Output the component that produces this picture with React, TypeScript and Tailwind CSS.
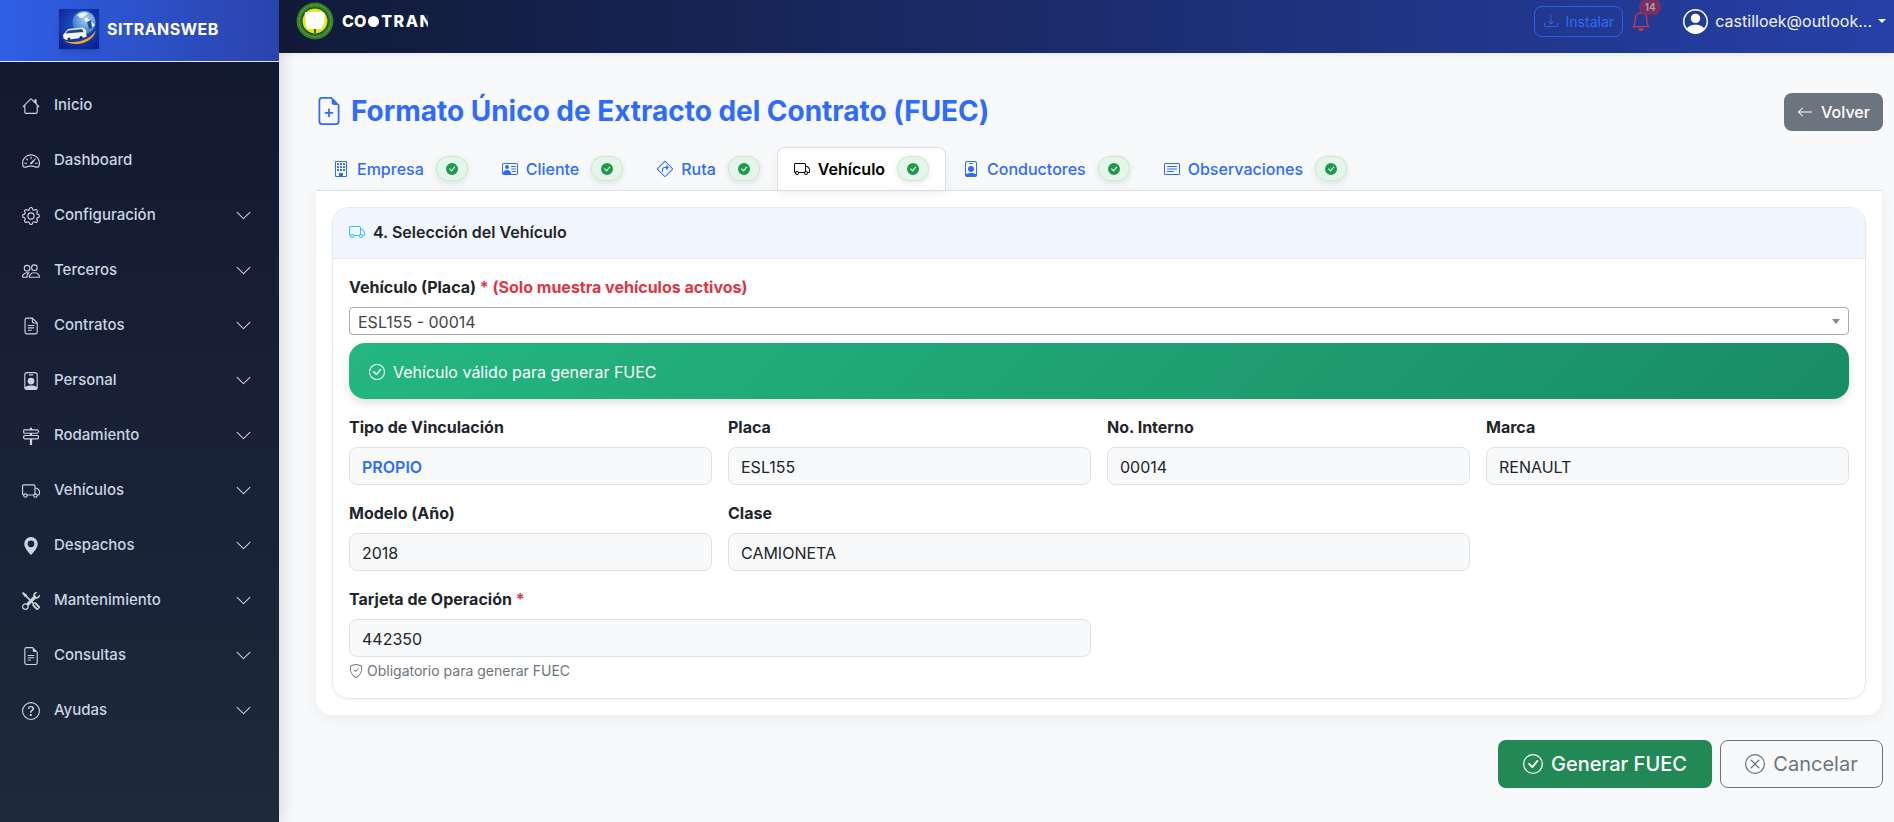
import type { ReactNode } from "react"
import {
  BsArrowLeft,
  BsBell,
  BsBuilding,
  BsCardText,
  BsCheckCircle,
  BsCheckCircleFill,
  BsChevronDown,
  BsDownload,
  BsFileEarmarkPlus,
  BsFileEarmarkText,
  BsGear,
  BsGeoAltFill,
  BsHouse,
  BsPeople,
  BsPersonBadge,
  BsPersonCircle,
  BsPersonVcard,
  BsQuestionCircle,
  BsShieldCheck,
  BsSignTurnRight,
  BsSignpost2,
  BsSpeedometer2,
  BsTools,
  BsTruck,
  BsXCircle,
} from "react-icons/bs"

function IconoContrato() {
  return (
    <svg viewBox="0 0 16 16" width="1em" height="1em" fill="none" stroke="currentColor" strokeWidth="1">
      <path d="M4.2 1h5l4.3 4.3v8.2a1.5 1.5 0 0 1-1.5 1.5H4.2a1.5 1.5 0 0 1-1.5-1.5v-11A1.5 1.5 0 0 1 4.2 1z" />
      <path d="M9.2 1v2.8a1.5 1.5 0 0 0 1.5 1.5h2.8" />
      <path d="M5.2 7.6h5.6M5.2 9.7h5.6M5.2 11.8h3.4" />
    </svg>
  )
}

const menu = [
  { nombre: "Inicio", icono: <BsHouse />, flecha: false },
  { nombre: "Dashboard", icono: <BsSpeedometer2 />, flecha: false },
  { nombre: "Configuración", icono: <BsGear />, flecha: true },
  { nombre: "Terceros", icono: <BsPeople />, flecha: true },
  { nombre: "Contratos", icono: <IconoContrato />, flecha: true },
  { nombre: "Personal", icono: <BsPersonBadge />, flecha: true },
  { nombre: "Rodamiento", icono: <BsSignpost2 />, flecha: true },
  { nombre: "Vehículos", icono: <BsTruck />, flecha: true },
  { nombre: "Despachos", icono: <BsGeoAltFill />, flecha: true },
  { nombre: "Mantenimiento", icono: <BsTools />, flecha: true },
  { nombre: "Consultas", icono: <BsFileEarmarkText />, flecha: true },
  { nombre: "Ayudas", icono: <BsQuestionCircle />, flecha: true },
]

const pestanas = [
  { nombre: "Empresa", icono: <BsBuilding /> },
  { nombre: "Cliente", icono: <BsPersonVcard /> },
  { nombre: "Ruta", icono: <BsSignTurnRight /> },
  { nombre: "Vehículo", icono: <BsTruck />, activa: true },
  { nombre: "Conductores", icono: <BsPersonBadge /> },
  { nombre: "Observaciones", icono: <BsCardText /> },
]

function LogoSitrans() {
  return (
    <svg viewBox="0 0 40 40" className="h-10 w-10 shrink-0 shadow-md">
      <defs>
        <radialGradient id="fondoLogo" cx="0.5" cy="0.4" r="0.75">
          <stop offset="0" stopColor="#1c5ad0" />
          <stop offset="1" stopColor="#0a1c8c" />
        </radialGradient>
        <radialGradient id="globoLogo" cx="0.6" cy="0.35" r="0.7">
          <stop offset="0" stopColor="#a8d0f4" />
          <stop offset="1" stopColor="#2f74cc" />
        </radialGradient>
      </defs>
      <rect width="40" height="40" fill="url(#fondoLogo)" />
      <circle cx="25" cy="13.5" r="11.5" fill="url(#globoLogo)" />
      <path d="M18 6c3-3 8-3.5 11-2-1 2-3 2-4 4-2 2-5 1-7-2Z" fill="#e6f0fa" />
      <path d="M27 8l9 8-2 2-9-7Z" fill="#f4f8fc" />
      <path d="M28 13l4-2 1 8-3 1Z" fill="#1d4d9e" />
      <path d="M5 31.5c12 4 25 0 32-10-2 8-10 13-18 13.5-6 .4-11-1-14-3.500Z" fill="#f2a51e" />
      <path d="M4 26l5-6 15-1.500 3 3 .5 6.500-20 3-3-1.500Z" fill="#f2f5fa" />
      <path d="M9 21.500l14-1.500 1.500 3-18 1.500Z" fill="#23477c" />
      <circle cx="10" cy="30" r="1.500" fill="#1b2a4a" />
      <circle cx="22" cy="28.500" r="1.500" fill="#1b2a4a" />
    </svg>
  )
}

function LogoCootrans() {
  return (
    <svg viewBox="0 0 38 38" className="h-[38px] w-[38px] shrink-0">
      <circle cx="19" cy="19" r="18.500" fill="#2f7d26" />
      <circle cx="19" cy="19" r="16" fill="none" stroke="#8dbb4a" strokeWidth="1" strokeDasharray="1.500 1" />
      <circle cx="19" cy="19" r="13.500" fill="#163f16" />
      <circle cx="19" cy="19" r="12.500" fill="#e4e428" />
      <path d="M18 26h2v5h-2Z" fill="#2f7d26" />
      <path d="M9 10h16l4 1-1 12-3 4H12l-2-3Z" fill="#ffffff" />
    </svg>
  )
}

function BadgeOk() {
  return (
    <span className="flex h-[25px] w-[32px] items-center justify-center rounded-[12px] border border-[#c6ecd2] bg-[#e6f5eb] text-[12px] text-[#1f9a4c] shadow-[0_2px_6px_rgba(0,0,0,0.1)]">
      <BsCheckCircleFill />
    </span>
  )
}

function Campo({
  etiqueta,
  valor,
  ancho,
  marcado,
  requerido,
  children,
}: {
  etiqueta: string
  valor: string
  ancho?: string
  marcado?: boolean
  requerido?: boolean
  children?: ReactNode
}) {
  return (
    <div className={ancho}>
      <label className="mb-[7px] block h-[25px] text-base leading-[25px] font-bold text-[#212529]">
        {etiqueta}
        {requerido && <span className="text-[#dc3545]"> *</span>}
      </label>
      <div
        className={`flex h-[38px] items-center rounded-lg border border-[#dee2e6] bg-[#f8f9fa] px-[12px] pt-[1px] text-base ${
          marcado ? "font-semibold text-[#2f6bff]" : "text-[#212529]"
        }`}
      >
        {valor}
      </div>
      {children}
    </div>
  )
}

export default function App() {
  return (
    <div className="flex h-[822px] w-full overflow-hidden bg-[#f8f9fb] font-['Inter',sans-serif]">
      <aside className="z-10 flex w-[279px] shrink-0 flex-col bg-gradient-to-b from-[#111830] to-[#1e293b] shadow-[4px_0_14px_rgba(0,0,0,0.12)]">
        <div className="flex h-[62px] items-center gap-2 border-b-[1px] border-[#e8ecf6] bg-gradient-to-r from-[#2f5fe6] to-[#2a44ac] pb-[3px] pl-[59px]">
          <LogoSitrans />
          <span className="text-[16px] font-bold tracking-[0.4px] text-white">SITRANSWEB</span>
        </div>
        <nav className="pt-4">
          {menu.map((item) => (
            <div key={item.nombre} className="flex h-[55px] items-center pr-[27px] pl-[22px] text-[#cbd5e1]">
              <span className="flex w-[18px] justify-center text-[18px]">{item.icono}</span>
              <span className="ml-[14px] flex-1 text-[15px] font-medium">{item.nombre}</span>
              {item.flecha && <BsChevronDown className="text-[17px]" />}
            </div>
          ))}
        </nav>
      </aside>

      <div className="flex min-w-0 flex-1 flex-col">
        <header className="flex h-[53px] shrink-0 items-center bg-gradient-to-r from-[#111a38] to-[#2640a8] pr-[8px] pb-[11px] pl-[17px] shadow-[0_2px_6px_rgba(0,0,0,0.06)]">
          <LogoCootrans />
          <div className="ml-[8px] flex w-[86px] items-center overflow-hidden text-[16px] font-extrabold whitespace-nowrap text-white">
            CO
            <span className="mx-[2px] inline-block h-[11px] w-[11px] shrink-0 rounded-full bg-white" />
            <span className="tracking-[1.5px]">TRANS</span>
          </div>
          <button className="ml-auto flex h-[31px] w-[89px] items-center justify-center gap-2 rounded-lg border border-[#2563eb] text-[14px] text-[#2d6cf0]">
            <BsDownload className="text-[14px]" />
            Instalar
          </button>
          <div className="relative ml-2 text-[20px] text-[#dc3545]">
            <BsBell />
            <span className="absolute top-[-12px] left-[8px] flex h-[16px] w-[22px] items-center justify-center rounded-full bg-[#7d3060] pt-[1px] text-[10px] font-semibold text-[#a9a3b8]">
              14
            </span>
          </div>
          <BsPersonCircle className="ml-8 text-[25px] text-white" />
          <span className="ml-[7px] text-[16px] text-[#f0f3fa]">castilloek@outlook...</span>
          <span className="ml-[6px] h-0 w-0 border-x-[4px] border-t-[4px] border-x-transparent border-t-white" />
        </header>

        <main className="flex-1 pt-10 pr-[11px] pl-[37px]">
          <div className="mb-4 flex h-[38px] items-center justify-between">
            <h1 className="flex items-center pb-[2px] text-[28px] font-bold tracking-[-0.03px] text-[#2f6bff]">
              <BsFileEarmarkPlus className="ml-[-1px] text-[28px]" />
              <span className="ml-[8px]">Formato Único de Extracto del Contrato (FUEC)</span>
            </h1>
            <button className="flex h-[38px] w-[99px] items-center justify-center gap-2 rounded-lg bg-[#6c757d] text-base font-medium text-white">
              <BsArrowLeft className="text-[16px]" />
              Volver
            </button>
          </div>

          <div className="relative z-[1] flex h-[43px] items-stretch">
            {pestanas.map((tab) => (
              <div
                key={tab.nombre}
                className={`flex items-center rounded-t-lg border border-b-0 px-4 pb-[1px] ${
                  tab.activa
                    ? "border-[#dee2e6] bg-white text-black shadow-[0_4px_10px_rgba(0,0,0,0.06)]"
                    : "border-transparent text-[#2f6bff]"
                }`}
              >
                <span className="text-[16px]">{tab.icono}</span>
                <span className={`mr-3 ml-2 text-base ${tab.activa ? "font-semibold" : "font-medium"}`}>
                  {tab.nombre}
                </span>
                <BadgeOk />
              </div>
            ))}
          </div>

          <section className="mr-[1px] rounded-b-2xl border-t border-[#dee2e6] bg-white p-4 shadow-[0_4px_16px_rgba(0,0,0,0.06)]">
            <div className="rounded-2xl border border-[#e6eaf0] shadow-[0_1px_3px_rgba(0,0,0,0.05)]">
              <div className="flex h-[51px] items-center gap-2 rounded-t-2xl border-b border-[#e6eaf0] bg-[#f1f5fe] px-4 pb-[2px] text-base font-semibold text-[#212529]">
                <BsTruck className="text-[16px] text-[#38c6f4]" />
                4. Selección del Vehículo
              </div>

              <div className="p-4 pb-[17px]">
                <label className="mb-2 block h-6 text-base leading-6 font-bold text-[#212529]">
                  Vehículo (Placa) <span className="text-[#dc3545]">* (Solo muestra vehículos activos)</span>
                </label>
                <div className="flex h-7 items-center justify-between rounded border border-[#aaaaaa] pt-[1px] pr-[8px] pl-[8px] text-base text-[#444444]">
                  ESL155 - 00014
                  <span className="h-0 w-0 border-x-[4px] border-t-[5px] border-x-transparent border-t-[#888888]" />
                </div>

                <div className="mt-2 flex h-14 items-center gap-[8px] rounded-2xl bg-linear-[135deg] from-[#24b781] to-[#198c66] px-5 pt-[1px] text-base text-white shadow-[0_4px_8px_rgba(0,0,0,0.12)]">
                  <BsCheckCircle className="text-[16px]" />
                  Vehículo válido para generar FUEC
                </div>

                <div className="mt-4 grid grid-cols-4 gap-x-4 gap-y-4">
                  <Campo etiqueta="Tipo de Vinculación" valor="PROPIO" marcado />
                  <Campo etiqueta="Placa" valor="ESL155" />
                  <Campo etiqueta="No. Interno" valor="00014" />
                  <Campo etiqueta="Marca" valor="RENAULT" />
                  <Campo etiqueta="Modelo (Año)" valor="2018" />
                  <Campo etiqueta="Clase" valor="CAMIONETA" ancho="col-span-2" />
                  <Campo etiqueta="Tarjeta de Operación" valor="442350" ancho="col-span-2" requerido>
                    <p className="mt-1 flex items-center gap-[4px] text-sm text-[#6c757d]">
                      <BsShieldCheck className="text-[14px]" />
                      Obligatorio para generar FUEC
                    </p>
                  </Campo>
                </div>
              </div>
            </div>
          </section>

          <div className="mt-[25px] flex justify-end gap-2">
            <button className="flex h-12 w-[214px] items-center justify-center gap-2 rounded-lg bg-[#218856] text-[20px] font-medium text-white">
              <BsCheckCircle className="text-[20px]" />
              Generar FUEC
            </button>
            <button className="flex h-12 w-[163px] items-center justify-center gap-2 rounded-lg border border-[#6c757d] text-[20px] text-[#6c757d]">
              <BsXCircle className="text-[20px]" />
              Cancelar
            </button>
          </div>
        </main>
      </div>
    </div>
  )
}
